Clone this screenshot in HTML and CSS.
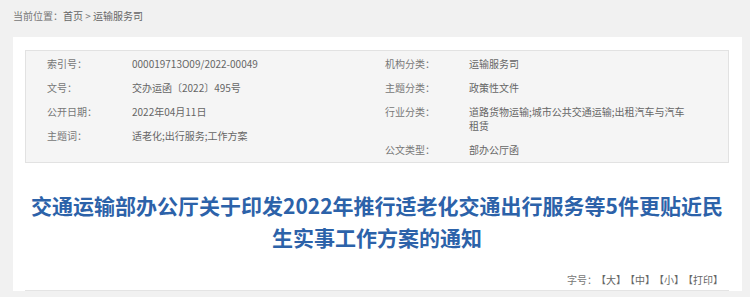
FILE: index.html
```html
<!DOCTYPE html>
<html>
<head>
    <meta charset="utf-8">
    <link rel="stylesheet" href="styles.css">
    <title>运输服务司</title>
</head>
<body>
    <div class="crumb">当前位置：<a class="crumbLink">首页</a> &gt; <a class="crumbLink">运输服务司</a></div>

    <div class="card">
        <div class="infoBox">
            <div class="infoCol">
                <div class="infoRow"><span class="label">索引号：</span><span class="value">000019713O09/2022-00049</span></div>
                <div class="infoRow"><span class="label">文号：</span><span class="value">交办运函〔2022〕495号</span></div>
                <div class="infoRow"><span class="label">公开日期：</span><span class="value">2022年04月11日</span></div>
                <div class="infoRow"><span class="label">主题词：</span><span class="value">适老化;出行服务;工作方案</span></div>
            </div>
            <div class="infoCol right">
                <div class="infoRow"><span class="label">机构分类：</span><span class="value">运输服务司</span></div>
                <div class="infoRow"><span class="label">主题分类：</span><span class="value">政策性文件</span></div>
                <div class="infoRow"><span class="label">行业分类：</span><span class="value">道路货物运输;城市公共交通运输;出租汽车与汽车租赁</span></div>
                <div class="infoRow"><span class="label">公文类型：</span><span class="value">部办公厅函</span></div>
            </div>
        </div>

        <h1 class="title">交通运输部办公厅关于印发2022年推行适老化交通出行服务等5件更贴近民生实事工作方案的通知</h1>

        <div class="tools">字号：<a>【大】</a><a>【中】</a><a>【小】</a><a>【打印】</a></div>
    </div>
</body>
</html>
```

FILE: styles.css
```css
* {
    box-sizing: border-box;
}

html {
    font-family: "Noto Sans CJK SC", "Noto Sans", sans-serif;
}

body {
    margin: 0;
    background-color: #f1f1f1;
    color: #666666;
}

.crumb {
    height: 37px;
    padding: 9px 0 0 13px;
    font-size: 10px;
    line-height: 14px;
    color: #777777;
}

.crumbLink {
    color: #666666;
}

.card {
    margin: 0 8px 0 13px;
    background-color: #ffffff;
    padding: 13px 13px 0 12px;
}

.infoBox {
    display: flex;
    background-color: #f5f5f5;
    border: 1px solid #e2e2e2;
    padding: 1px 0 0 0;
}

.infoCol {
    width: 352px;
    padding-left: 21px;
}

.infoCol.right {
    flex: 1;
    padding-left: 7px;
    padding-right: 40px;
}

.infoRow {
    display: flex;
    padding: 5px 0;
    font-size: 10px;
    line-height: 14px;
}

.label {
    flex: none;
    width: 85px;
    color: #777777;
}

.infoCol.right .label {
    width: 84px;
}

.value {
    color: #666666;
}

.title {
    margin: 26px 0 0 0;
    text-align: center;
    font-size: 21px;
    line-height: 32px;
    font-weight: bold;
    color: #2c62a9;
}

.tools {
    margin-top: 20px;
    padding: 0 6px 3px 0;
    border-bottom: 1px solid #e4e4e4;
    text-align: right;
    font-size: 10px;
    line-height: 14px;
    color: #777777;
}

.tools a {
    margin-left: 4px;
    color: #666666;
}
```
